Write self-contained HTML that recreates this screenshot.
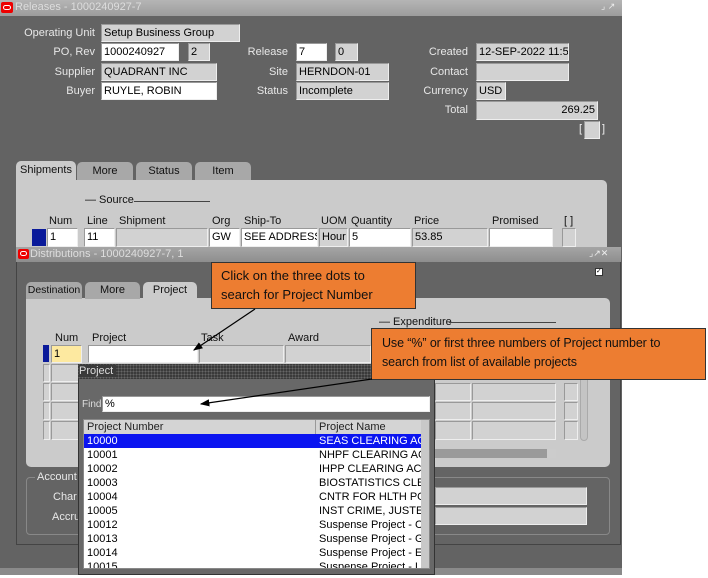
<!DOCTYPE html>
<html><head><meta charset="utf-8"><style>
*{margin:0;padding:0;box-sizing:border-box}
body{width:708px;height:578px;background:#fff;position:relative;overflow:hidden;font-family:"Liberation Sans",Arial,sans-serif;font-size:11px;color:#000}
.a{position:absolute}
.l{position:absolute;color:#e8e8e8;text-align:right;white-space:nowrap}
.f{position:absolute;background:#d2d2d2;border:1px solid #eee;border-top-color:#999;border-left-color:#999;padding:1px 2px;white-space:nowrap;overflow:hidden;line-height:14px}
.w{background:#fff}
.h{position:absolute;color:#111;white-space:nowrap}
.tab{position:absolute;background:#a8a8a8;border-radius:5px 5px 0 0;text-align:center;line-height:18px;color:#111}
.row{position:absolute;left:0;width:347px;height:14px;line-height:14px;white-space:nowrap}
.row span{position:absolute}
.co{position:absolute;background:#ed7d31;border:1px solid #333;font-family:"Liberation Sans",sans-serif;font-size:13px;line-height:19px;color:#111;white-space:nowrap}
</style></head><body>
<div class="a" style="left:0;top:0;width:622px;height:575px;background:#636363"></div>
<div class="a" style="left:0;top:0;width:622px;height:16px;background:linear-gradient(#b5b5b5,#9c9c9c)"></div>
<div class="a" style="left:1px;top:2px;width:12px;height:11px;background:#e00;border-radius:2px"><div style="margin:3px 2px;width:8px;height:5px;border:1.5px solid #fff;border-radius:3px"></div></div>
<div class="a" style="left:15px;top:1px;color:#ddd;font-size:11px">Releases - 1000240927-7</div>
<div class="a" style="left:601px;top:1px;color:#eee;font-size:9px">⌟ ↗</div>
<div class="a" style="left:0;top:568px;width:622px;height:7px;background:#8a8a8a"></div>

<div class="l" style="right:613px;top:27px">Operating Unit</div>
<div class="f" style="left:101px;top:24px;width:139px;height:18px">Setup Business Group</div>
<div class="l" style="right:613px;top:46px">PO, Rev</div>
<div class="f w" style="left:101px;top:43px;width:78px;height:18px">1000240927</div>
<div class="f" style="left:188px;top:43px;width:22px;height:18px">2</div>
<div class="l" style="right:613px;top:66px">Supplier</div>
<div class="f" style="left:101px;top:63px;width:116px;height:18px">QUADRANT INC</div>
<div class="l" style="right:613px;top:85px">Buyer</div>
<div class="f w" style="left:101px;top:82px;width:116px;height:18px">RUYLE, ROBIN</div>

<div class="l" style="right:420px;top:46px">Release</div>
<div class="f w" style="left:296px;top:43px;width:31px;height:18px">7</div>
<div class="f" style="left:335px;top:43px;width:23px;height:18px">0</div>
<div class="l" style="right:420px;top:66px">Site</div>
<div class="f" style="left:296px;top:63px;width:93px;height:18px">HERNDON-01</div>
<div class="l" style="right:420px;top:85px">Status</div>
<div class="f" style="left:296px;top:82px;width:93px;height:18px">Incomplete</div>

<div class="l" style="right:240px;top:46px">Created</div>
<div class="f" style="left:476px;top:43px;width:93px;height:18px">12-SEP-2022 11:59</div>
<div class="l" style="right:240px;top:66px">Contact</div>
<div class="f" style="left:476px;top:63px;width:93px;height:18px"></div>
<div class="l" style="right:240px;top:85px">Currency</div>
<div class="f" style="left:476px;top:82px;width:30px;height:18px">USD</div>
<div class="l" style="right:240px;top:104px">Total</div>
<div class="f" style="left:476px;top:101px;width:122px;height:19px;text-align:right">269.25</div>
<div class="a" style="left:579px;top:123px;color:#eee">[</div>
<div class="f" style="left:584px;top:121px;width:16px;height:18px"></div>
<div class="a" style="left:602px;top:123px;color:#eee">]</div>

<div class="a" style="left:16px;top:180px;width:591px;height:70px;background:#cbcbcb;border-radius:0 5px 0 0"></div>
<div class="tab" style="left:16px;top:161px;width:60px;height:20px;background:#cbcbcb">Shipments</div>
<div class="tab" style="left:77px;top:162px;width:56px">More</div>
<div class="tab" style="left:136px;top:162px;width:56px">Status</div>
<div class="tab" style="left:195px;top:162px;width:56px">Item</div>
<div class="h" style="left:85px;top:194px">— Source</div>
<div class="a" style="left:134px;top:201px;width:76px;height:1px;background:#444"></div>
<div class="h" style="left:49px;top:215px">Num</div><div class="h" style="left:87px;top:215px">Line</div><div class="h" style="left:119px;top:215px">Shipment</div><div class="h" style="left:212px;top:215px">Org</div><div class="h" style="left:244px;top:215px">Ship-To</div><div class="h" style="left:321px;top:215px">UOM</div><div class="h" style="left:351px;top:215px">Quantity</div><div class="h" style="left:414px;top:215px">Price</div><div class="h" style="left:492px;top:215px">Promised</div><div class="h" style="left:564px;top:215px">[ ]</div>
<div class="a" style="left:32px;top:229px;width:14px;height:17px;background:#0a1a9a"></div>
<div class="f w" style="left:47px;top:228px;width:31px;height:19px">1</div>
<div class="f w" style="left:84px;top:228px;width:31px;height:19px">11</div>
<div class="f" style="left:116px;top:228px;width:92px;height:19px"></div>
<div class="f w" style="left:209px;top:228px;width:31px;height:19px">GW</div>
<div class="f w" style="left:241px;top:228px;width:77px;height:19px">SEE ADDRESS</div>
<div class="f" style="left:319px;top:228px;width:29px;height:19px">Hour</div>
<div class="f w" style="left:349px;top:228px;width:62px;height:19px">5</div>
<div class="f" style="left:412px;top:228px;width:76px;height:19px">53.85</div>
<div class="f w" style="left:489px;top:228px;width:64px;height:19px"></div>
<div class="f" style="left:562px;top:228px;width:14px;height:19px"></div>

<div class="a" style="left:16px;top:247px;width:605px;height:298px;background:#646464;border:1px solid #444"></div>
<div class="a" style="left:16px;top:247px;width:605px;height:15px;background:linear-gradient(#a5a5a5,#8e8e8e)"></div>
<div class="a" style="left:18px;top:249px;width:11px;height:10px;background:#e00;border-radius:2px"><div style="margin:2px 2px;width:7px;height:5px;border:1.5px solid #fff;border-radius:3px"></div></div>
<div class="a" style="left:30px;top:248px;color:#ddd">Distributions - 1000240927-7, 1</div>
<div class="a" style="left:589px;top:248px;color:#eee;font-size:9px">⌟↗✕</div>
<div class="a" style="left:595px;top:268px;width:8px;height:8px;background:#fff;border:1px solid #333;font-size:7px;line-height:6px">✓</div>
<div class="a" style="left:26px;top:298px;width:584px;height:169px;background:#cbcbcb;border-radius:0 5px 5px 5px"></div>
<div class="tab" style="left:26px;top:282px;width:56px;height:17px;line-height:17px;font-size:10.5px">Destination</div>
<div class="tab" style="left:85px;top:282px;width:55px;height:17px;line-height:17px">More</div>
<div class="tab" style="left:143px;top:282px;width:54px;height:17px;line-height:17px;background:#cbcbcb">Project</div>
<div class="h" style="left:379px;top:316px">— Expenditure</div>
<div class="a" style="left:449px;top:322px;width:107px;height:1px;background:#444"></div>
<div class="h" style="left:55px;top:332px">Num</div><div class="h" style="left:92px;top:332px">Project</div><div class="h" style="left:201px;top:332px">Task</div><div class="h" style="left:288px;top:332px">Award</div>
<div class="a" style="left:43px;top:345px;width:6px;height:17px;background:#0a1a9a"></div>
<div class="f" style="left:51px;top:345px;width:31px;height:18px;background:#fde9a0">1</div>
<div class="f w" style="left:88px;top:345px;width:110px;height:18px"></div>
<div class="f" style="left:199px;top:345px;width:85px;height:18px"></div>
<div class="f" style="left:285px;top:345px;width:86px;height:18px"></div>
<div class="f" style="left:43px;top:364px;width:7px;height:18px"></div><div class="f" style="left:51px;top:364px;width:28px;height:18px"></div>
<div class="f" style="left:43px;top:383px;width:7px;height:18px"></div><div class="f" style="left:51px;top:383px;width:28px;height:18px"></div>
<div class="f" style="left:43px;top:402px;width:7px;height:18px"></div><div class="f" style="left:51px;top:402px;width:28px;height:18px"></div>
<div class="f" style="left:43px;top:421px;width:7px;height:19px"></div><div class="f" style="left:51px;top:421px;width:28px;height:19px"></div>
<div class="f" style="left:435px;top:383px;width:36px;height:18px"></div><div class="f" style="left:472px;top:383px;width:84px;height:18px"></div><div class="f" style="left:564px;top:383px;width:14px;height:18px"></div>
<div class="f" style="left:435px;top:402px;width:36px;height:18px"></div><div class="f" style="left:472px;top:402px;width:84px;height:18px"></div><div class="f" style="left:564px;top:402px;width:14px;height:18px"></div>
<div class="f" style="left:435px;top:421px;width:36px;height:19px"></div><div class="f" style="left:472px;top:421px;width:84px;height:19px"></div><div class="f" style="left:564px;top:421px;width:14px;height:19px"></div>
<div class="a" style="left:580px;top:378px;width:8px;height:63px;background:#c4c4c4;border:1px solid #aaa;border-radius:0 0 4px 4px"></div>
<div class="a" style="left:430px;top:449px;width:126px;height:9px;background:#9a9a9a"></div>
<div class="a" style="left:547px;top:449px;width:9px;height:9px;background:#ccc"></div>
<div class="a" style="left:26px;top:477px;width:584px;height:58px;border:1px solid #888;border-radius:4px"></div>
<div class="l" style="left:35px;top:471px;background:#646464;padding:0 2px">Account</div>
<div class="l" style="left:53px;top:491px">Char</div>
<div class="l" style="left:52px;top:511px">Accru</div>
<div class="f" style="left:435px;top:487px;width:152px;height:18px"></div>
<div class="f" style="left:435px;top:507px;width:152px;height:18px"></div>

<div class="a" style="left:78px;top:364px;width:357px;height:211px;background:#686868;border:1px solid #333"></div>
<div class="a" style="left:78px;top:364px;width:357px;height:15px;background:#3a3a3a;background-image:radial-gradient(#666 0.8px,transparent 1px);background-size:3px 3px"></div>
<div class="a" style="left:79px;top:365px;color:#ddd;background:#3a3a3a;padding-right:3px">Project</div>
<div class="a" style="left:82px;top:399px;color:#ddd;font-size:10px">Find</div>
<div class="f w" style="left:102px;top:396px;width:328px;height:16px;line-height:12px;padding-top:1px">%</div>
<div class="a" style="left:83px;top:419px;width:347px;height:150px;background:#fff;border:1px solid #888;overflow:hidden">
 <div class="a" style="left:0;top:0;width:337px;height:14px;background:#d4d4d4"></div>
 <div class="a" style="left:231px;top:0;width:1px;height:14px;background:#999"></div>
 <div class="a" style="left:3px;top:1px;color:#222">Project Number</div>
 <div class="a" style="left:235px;top:1px;color:#222">Project Name</div>
 <div class="a" style="left:337px;top:0;width:10px;height:150px;background:#c8c8c8"></div>
 <div class="row" style="top:14px;background:#0a14f0;color:#fff;width:337px;overflow:hidden"><span style="left:3px">10000</span><span style="left:235px">SEAS CLEARING ACCO</span></div>
 <div class="row" style="top:28px;width:337px;overflow:hidden"><span style="left:3px">10001</span><span style="left:235px">NHPF CLEARING ACCO</span></div>
 <div class="row" style="top:42px;width:337px;overflow:hidden"><span style="left:3px">10002</span><span style="left:235px">IHPP CLEARING ACCO</span></div>
 <div class="row" style="top:56px;width:337px;overflow:hidden"><span style="left:3px">10003</span><span style="left:235px">BIOSTATISTICS CLEAR</span></div>
 <div class="row" style="top:70px;width:337px;overflow:hidden"><span style="left:3px">10004</span><span style="left:235px">CNTR FOR HLTH POL</span></div>
 <div class="row" style="top:84px;width:337px;overflow:hidden"><span style="left:3px">10005</span><span style="left:235px">INST CRIME, JUSTE AN</span></div>
 <div class="row" style="top:98px;width:337px;overflow:hidden"><span style="left:3px">10012</span><span style="left:235px">Suspense Project - CCA</span></div>
 <div class="row" style="top:112px;width:337px;overflow:hidden"><span style="left:3px">10013</span><span style="left:235px">Suspense Project - GSE</span></div>
 <div class="row" style="top:126px;width:337px;overflow:hidden"><span style="left:3px">10014</span><span style="left:235px">Suspense Project - ESI</span></div>
 <div class="row" style="top:140px;width:337px;overflow:hidden"><span style="left:3px">10015</span><span style="left:235px">Suspense Project - LNA</span></div>
</div>
<div class="a" style="left:0;top:575px;width:708px;height:3px;background:#fff"></div>

<div class="co" style="left:211px;top:262px;width:205px;height:47px;padding:3px 0 0 9px">Click on the three dots to<br>search for Project Number</div>
<div class="co" style="left:371px;top:328px;width:335px;height:52px;padding:5px 0 0 10px;font-size:12.5px;letter-spacing:-0.1px">Use “%” or first three numbers of Project number to<br>search from list of available projects</div>
<svg class="a" style="left:0;top:0" width="708" height="578">
<defs><marker id="m" markerWidth="8" markerHeight="6" refX="7" refY="3" orient="auto"><path d="M0,0L8,3L0,6z" fill="#000"/></marker></defs>
<line x1="255" y1="309" x2="194" y2="350" stroke="#000" stroke-width="1.2" marker-end="url(#m)"/>
<line x1="372" y1="379" x2="201" y2="404" stroke="#000" stroke-width="1.2" marker-end="url(#m)"/>
</svg>
</body></html>
